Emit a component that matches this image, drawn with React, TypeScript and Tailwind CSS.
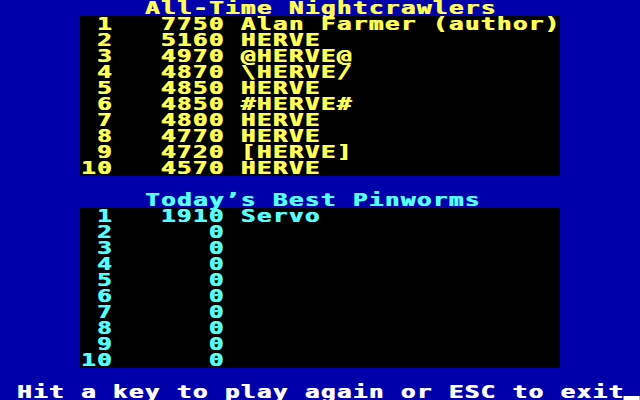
import React from "react";

type Entry = { rank: number; score: number; name: string };

const allTime: Entry[] = [
  { rank: 1, score: 7750, name: "Alan Farmer (author)" },
  { rank: 2, score: 5160, name: "HERVE" },
  { rank: 3, score: 4970, name: "@HERVE@" },
  { rank: 4, score: 4870, name: "\\HERVE/" },
  { rank: 5, score: 4850, name: "HERVE" },
  { rank: 6, score: 4850, name: "#HERVE#" },
  { rank: 7, score: 4800, name: "HERVE" },
  { rank: 8, score: 4770, name: "HERVE" },
  { rank: 9, score: 4720, name: "[HERVE]" },
  { rank: 10, score: 4570, name: "HERVE" },
];

const today: Entry[] = [
  { rank: 1, score: 1910, name: "Servo" },
  ...Array.from({ length: 9 }, (_, i) => ({ rank: i + 2, score: 0, name: "" })),
];

// text-mode line: cells are 16px once the whole line is stretched by 1.35
const Line: React.FC<{ text: string; className?: string; children?: React.ReactNode }> = ({
  text,
  className = "",
  children,
}) => (
  <div className={`h-4 ${className}`}>
    <div className="flex h-4 origin-left scale-x-[1.35] [text-shadow:0.75px_0_0_currentColor]">
      {Array.from(text).map((ch, i) => (
        <span key={i} className="w-[11.852px] shrink-0 text-center">
          {ch === " " ? "\u00a0" : ch}
        </span>
      ))}
      {children}
    </div>
  </div>
);

const Table: React.FC<{ rows: Entry[] }> = ({ rows }) => (
  <div className="ml-20 w-[480px] bg-black">
    {rows.map((r) => (
      <Line
        key={r.rank}
        text={String(r.rank).padStart(2) + String(r.score).padStart(7) + " " + r.name}
      />
    ))}
  </div>
);

export default function App() {
  return (
    <div className="w-[640px] h-[400px] overflow-hidden bg-[#0000AA] font-['DejaVu_Sans_Mono','Liberation_Mono',monospace] font-bold text-[18px] leading-4">
      <Line text="All-Time Nightcrawlers" className="pl-36 text-[#FFFF55]" />
      <div className="text-[#FFFF55]">
        <Table rows={allTime} />
      </div>
      <div className="h-4" />
      <Line text="Today’s Best Pinworms" className="pl-36 text-[#55FFFF]" />
      <div className="text-[#55FFFF]">
        <Table rows={today} />
      </div>
      <div className="h-4" />
      <Line text="Hit a key to play again or ESC to exit" className="pl-4 text-white">
        <span className="w-[11.852px] shrink-0 flex items-end">
          <span className="w-full h-1 bg-white" />
        </span>
      </Line>
    </div>
  );
}
